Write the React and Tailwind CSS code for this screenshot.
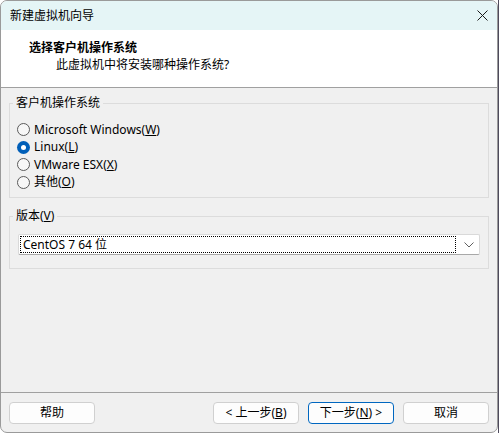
import React from "react";

const font = { fontFamily: '"Noto Sans", "Noto Sans CJK SC", sans-serif' };

function Radio({ checked, children }) {
  return (
    <div className="flex items-center h-[17.5px]">
      {checked ? (
        <span className="w-[13px] h-[13px] rounded-full bg-[#005fb8] flex items-center justify-center">
          <span className="w-[5px] h-[5px] rounded-full bg-white" />
        </span>
      ) : (
        <span className="w-[13px] h-[13px] rounded-full border border-[#5a5a5a] bg-[#f7f7f7]" />
      )}
      <span className="ml-[4px] text-[12px] text-black leading-none">{children}</span>
    </div>
  );
}

function Btn({ primary, children }) {
  return (
    <button
      className={
        "w-[86px] h-[22px] rounded-[4px] bg-[#fdfdfd] text-[12px] text-black leading-none flex items-center justify-center " +
        (primary ? "border border-[#0067c0]" : "border border-[#d0d0d0]")
      }
    >
      {children}
    </button>
  );
}

export default function App() {
  return (
    <div className="w-[499px] h-[433px] flex bg-white" style={font}>
      <div className="w-[498px] h-[433px] flex flex-col border border-[#9a9a9a] rounded-[7px] overflow-hidden bg-[#f0f0f0]">
        {/* title bar */}
        <div className="h-[29px] bg-[#e5f5f6] flex items-center justify-between pl-[9px] pr-[9px] shrink-0">
          <span className="text-[12px] text-black">新建虚拟机向导</span>
          <svg width="11" height="11" viewBox="0 0 11 11">
            <path d="M0.5 0.5L10.5 10.5M10.5 0.5L0.5 10.5" stroke="#1a1a1a" strokeWidth="1" />
          </svg>
        </div>

        {/* header */}
        <div className="h-[58px] bg-white border-b border-[#a0a0a0] shrink-0 pl-[28px] pt-[9px]">
          <div className="text-[12px] font-bold text-black leading-[17px]">选择客户机操作系统</div>
          <div className="text-[12px] text-black leading-[17px] pl-[27px]">此虚拟机中将安装哪种操作系统?</div>
        </div>

        {/* body */}
        <div className="flex-1 pl-[8px] pr-[8px] pt-[7px]">
          <fieldset className="border border-[#dcdcdc] h-[103px] p-0 m-0">
            <legend className="ml-[3px] px-[3px] text-[12px] text-black leading-[16px]">客户机操作系统</legend>
            <div className="pt-[10px] pl-[7px] flex flex-col">
              <Radio>Microsoft Windows(<u>W</u>)</Radio>
              <Radio checked>Linux(<u>L</u>)</Radio>
              <Radio>VMware ESX(<u>X</u>)</Radio>
              <Radio>其他(<u>O</u>)</Radio>
            </div>
          </fieldset>

          <fieldset className="border border-[#dcdcdc] h-[61px] mt-[10px] p-0 m-0">
            <legend className="ml-[3px] px-[3px] text-[12px] text-black leading-[16px]">
              版本(<u>V</u>)
            </legend>
            <div className="mt-[10px] mx-[8px] h-[21px] bg-white border border-[#d9d9d9] border-b-[#a8a8a8] rounded-[2px] flex items-center pl-[1px] pr-[5px]">
              <div className="h-[17px] flex-1 border border-dotted border-black flex items-center pl-[2px] text-[12px] text-black leading-none">
                CentOS 7 64 位
              </div>
              <svg width="10" height="6" viewBox="0 0 10 6" className="ml-[8px]">
                <path d="M0.5 0.5L5 5L9.5 0.5" fill="none" stroke="#606060" strokeWidth="1" />
              </svg>
            </div>
          </fieldset>
        </div>

        {/* footer */}
        <div className="h-[40px] border-t border-[#a0a0a0] shrink-0 flex items-start pt-[9px] pl-[8px] pr-[8px]">
          <Btn>帮助</Btn>
          <div className="flex-1" />
          <div className="flex gap-[9px]">
            <Btn>
              &lt; 上一步(<u>B</u>)
            </Btn>
            <Btn primary>
              下一步(<u>N</u>) &gt;
            </Btn>
            <Btn>取消</Btn>
          </div>
        </div>
      </div>
      <div className="w-[1px] h-full bg-[#4e4a5c]" />
    </div>
  );
}
